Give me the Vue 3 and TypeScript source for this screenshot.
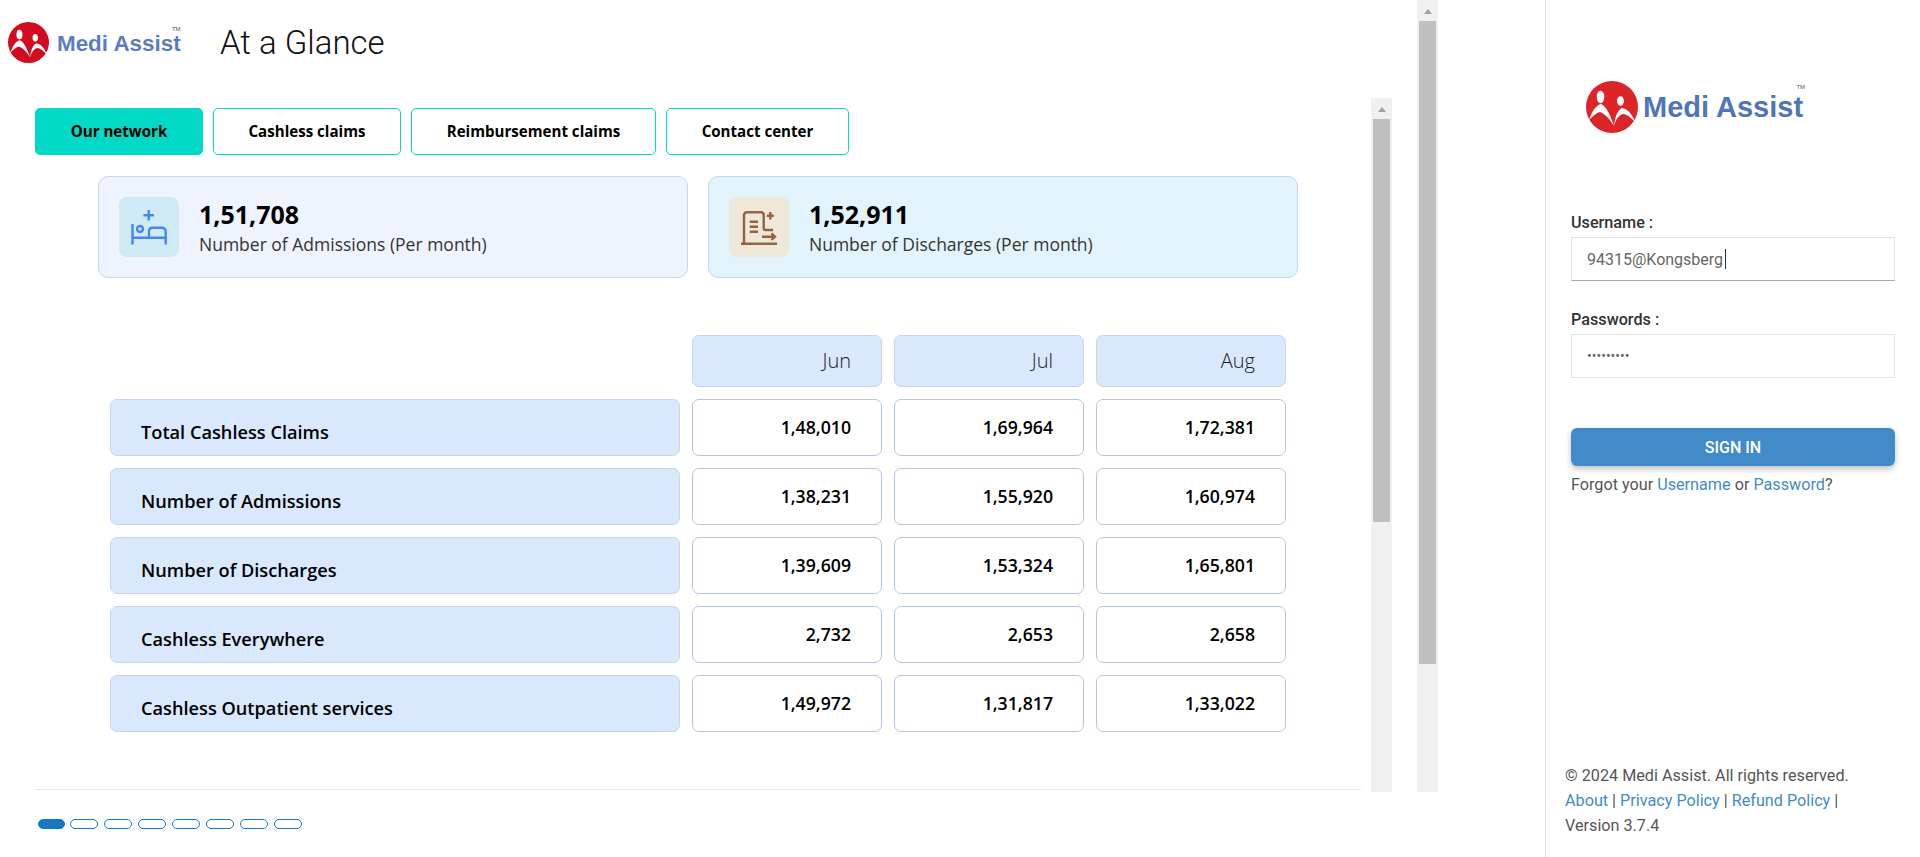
<script setup lang="ts">
interface Row { label: string; values: string[] }
const tabs: string[] = ['Our network', 'Cashless claims', 'Reimbursement claims', 'Contact center']
const months: string[] = ['Jun', 'Jul', 'Aug']
const rows: Row[] = [
  { label: 'Total Cashless Claims', values: ['1,48,010', '1,69,964', '1,72,381'] },
  { label: 'Number of Admissions', values: ['1,38,231', '1,55,920', '1,60,974'] },
  { label: 'Number of Discharges', values: ['1,39,609', '1,53,324', '1,65,801'] },
  { label: 'Cashless Everywhere', values: ['2,732', '2,653', '2,658'] },
  { label: 'Cashless Outpatient services', values: ['1,49,972', '1,31,817', '1,33,022'] },
]
const dots: number[] = [0, 1, 2, 3, 4, 5, 6, 7]
</script>

<template>
  <div class="page">
    <div class="left">
      <div class="main">
        <header class="head">
          <div class="brand brand-small">
            <svg class="mark" viewBox="0 0 52 52">
              <circle cx="26" cy="26" r="26" fill="#d20b1f" />
              <ellipse cx="14.5" cy="16" rx="3.8" ry="6.2" fill="#fff" />
              <ellipse cx="34.5" cy="20" rx="3.4" ry="4.8" fill="#fff" />
              <path d="M3 39C6 30 10 24 15 23C20 25 24 33 28 45C23 37 19 33 14 31C10 32 7 35 3 39Z" fill="#fff" />
              <path d="M28 45C29 35 32 29 36 27C41 28 46 32 49 41C45 37 41 33 37 33C33 34 30 38 28 45Z" fill="#fff" />
            </svg>
            <span class="brand-name">Medi Assist<sup class="tm">TM</sup></span>
          </div>
          <h1 class="title">At a Glance</h1>
        </header>
        <div class="body">
          <div class="content">
            <nav class="tabs">
              <button v-for="(t, i) in tabs" :key="t" class="tab" :class="{ active: i === 0 }">{{ t }}</button>
            </nav>
            <section class="cards">
              <div class="card card-a">
                <div class="ico ico-a">
                  <svg viewBox="0 0 60 60" width="60" height="60" fill="none" stroke="#4286f5" stroke-width="2.4">
                    <path d="M13.5 27v20.5M13.5 40.7H47.5M30 40.7V34a3.3 3.3 0 0 1 3.3-3.3H43a3.7 3.7 0 0 1 3.7 3.7v13" />
                    <circle cx="21" cy="32" r="3" />
                    <path d="M29.7 13v10.6M24.4 18.3H35" />
                  </svg>
                </div>
                <div>
                  <div class="num">1,51,708</div>
                  <div class="sub">Number of Admissions (Per month)</div>
                </div>
              </div>
              <div class="card card-b">
                <div class="ico ico-b">
                  <svg viewBox="0 0 60 60" width="60" height="60" fill="none" stroke="#98623f" stroke-width="2.4">
                    <path d="M15 46.7V18a2.7 2.7 0 0 1 2.7-2.7H32a2.7 2.7 0 0 1 2.7 2.7v13a2 2 0 0 0 2 2H44M12 46.7H48" />
                    <path d="M20.7 24.7H29M20.7 29.7H29M20.7 34.7H29" />
                    <path d="M41.3 15v7.4M37.8 18.7h7M33 39.7H46M42.5 36.5L46 39.7L42.5 43" />
                  </svg>
                </div>
                <div>
                  <div class="num">1,52,911</div>
                  <div class="sub">Number of Discharges (Per month)</div>
                </div>
              </div>
            </section>
            <section class="grid">
              <div class="blank"></div>
              <div v-for="m in months" :key="m" class="month">{{ m }}</div>
              <template v-for="r in rows" :key="r.label">
                <div class="label">{{ r.label }}</div>
                <div v-for="(v, i) in r.values" :key="i" class="val">{{ v }}</div>
              </template>
            </section>
            <hr class="rule" />
          </div>
          <div class="bar inner-bar">
            <div class="arrow"></div>
            <div class="thumb thumb-inner"></div>
          </div>
        </div>
        <div class="pager">
          <span v-for="d in dots" :key="d" class="dot" :class="{ on: d === 0 }"></span>
        </div>
      </div>
      <div class="bar outer-bar">
        <div class="arrow"></div>
        <div class="thumb thumb-outer"></div>
      </div>
    </div>

    <aside class="panel">
      <div class="brand brand-large">
        <svg class="mark" viewBox="0 0 52 52">
          <circle cx="26" cy="26" r="26" fill="#dc2528" />
          <ellipse cx="14.5" cy="16" rx="3.8" ry="6.2" fill="#fff" />
          <ellipse cx="34.5" cy="20" rx="3.4" ry="4.8" fill="#fff" />
          <path d="M3 39C6 30 10 24 15 23C20 25 24 33 28 45C23 37 19 33 14 31C10 32 7 35 3 39Z" fill="#fff" />
          <path d="M28 45C29 35 32 29 36 27C41 28 46 32 49 41C45 37 41 33 37 33C33 34 30 38 28 45Z" fill="#fff" />
        </svg>
        <span class="brand-name">Medi Assist<sup class="tm">TM</sup></span>
      </div>
      <form class="form" @submit.prevent>
        <label class="field-label">Username :</label>
        <div class="input-wrap">
          <input class="input input-user" type="text" value="94315@Kongsberg" readonly />
          <span class="caret"></span>
        </div>
        <label class="field-label second">Passwords :</label>
        <input class="input input-pass" type="password" value="secretpwd" readonly />
        <button class="signin" type="submit">SIGN IN</button>
        <p class="forgot">Forgot your <a>Username</a> or <a>Password</a>?</p>
      </form>
      <footer class="foot">
        <div>© 2024 Medi Assist. All rights reserved.</div>
        <div><a>About</a> | <a>Privacy Policy</a> | <a>Refund Policy</a> |</div>
        <div>Version 3.7.4</div>
      </footer>
    </aside>
  </div>
</template>

<style>
html, body { margin: 0; padding: 0; background: #fff; overflow: hidden; }
</style>

<style scoped>
.page { display: flex; width: 1920px; height: 857px; font-family: "Open Sans", sans-serif; color: #000; overflow: hidden; }
.left { width: 1545px; display: flex; align-items: flex-start; }
.main { width: 1417px; height: 857px; display: flex; flex-direction: column; }
.head { height: 98px; display: flex; align-items: flex-start; }
.brand { display: flex; align-items: center; font-family: "Liberation Sans", Arial, sans-serif; font-weight: 700; }
.brand-small { margin: 22px 0 0 8px; height: 40px; width: 212px; }
.brand-small .mark { width: 41px; height: 41px; flex: none; }
.brand-small .brand-name { margin-left: 8px; font-size: 22.4px; color: #5b7dbf; padding-top: 3px; }
.brand-name { position: relative; white-space: nowrap; }
.tm { position: absolute; right: 0; top: -3px; font-size: 6px; font-weight: 400; color: #555; line-height: 8px; }
.title { margin: 21px 0 0; font: 300 33px/44px Roboto, sans-serif; color: #111; }
.body { height: 694px; display: flex; align-items: flex-start; overflow: hidden; }
.content { margin-left: 35px; width: 1326px; display: flex; flex-direction: column; }
.tabs { display: flex; gap: 10px; margin-top: 10px; }
.tab { height: 47px; padding: 0 0 1px; box-sizing: border-box; background: #fff; border: 1px solid #00d9c6; border-radius: 5px; font: 700 15.1px "Open Sans", sans-serif; color: #000; }
.tab:nth-child(1) { width: 168px; }
.tab:nth-child(2) { width: 188px; }
.tab:nth-child(3) { width: 245px; }
.tab:nth-child(4) { width: 183px; }
.tab.active { background: #00d9c6; }
.cards { display: flex; gap: 20px; margin: 21px 0 0 63px; }
.card { width: 590px; height: 102px; box-sizing: border-box; padding: 20px; display: flex; align-items: center; gap: 20px; border: 1px solid #c9d5e8; border-radius: 10px; }
.card-a { background: #eff3fe; }
.card-b { background: #e3f3fb; }
.ico { width: 60px; height: 60px; flex: none; border-radius: 8px; }
.ico svg { display: block; }
.ico-a { background: #d0eaf5; }
.ico-b { background: #ede8da; }
.num { font-size: 25px; font-weight: 700; line-height: 30px; color: #000; margin-top: 2px; }
.sub { font-size: 17.5px; line-height: 26px; color: #333; margin-top: 2px; }
.grid { display: grid; grid-template-columns: 570px 190px 190px 190px; grid-template-rows: 52px repeat(5, 57px); gap: 12px; margin: 57px 0 0 75px; }
.month { box-sizing: border-box; background: #d9e8fd; border: 1px solid #c5d5ec; border-radius: 7px; text-align: right; padding-right: 30px; font-size: 20px; font-weight: 300; line-height: 50px; color: #222; }
.label { box-sizing: border-box; background: #d9e8fd; border: 1px solid #c5d5ec; border-radius: 7px; padding: 20px 0 0 30px; font-size: 18.2px; font-weight: 600; line-height: 24px; color: #000; }
.val { box-sizing: border-box; background: #fff; border: 1px solid #b4c5e6; border-radius: 7px; text-align: right; padding-right: 30px; font-size: 17.7px; font-weight: 600; line-height: 55px; color: #000; }
.rule { margin: 57px 0 0; border: 0; border-top: 1px solid #e5e5e5; }
.bar { width: 21px; flex: none; background: #f0f0f0; display: flex; flex-direction: column; align-items: center; }
.inner-bar { margin-left: 10px; height: 694px; }
.outer-bar { height: 792px; }
.arrow { height: 21px; width: 0; box-sizing: border-box; display: block; position: relative; }
.arrow::after { content: ""; position: absolute; left: -4px; top: 9px; border-left: 4px solid transparent; border-right: 4px solid transparent; border-bottom: 5px solid #a0a0a0; }
.thumb { width: 17px; background: #bfbfbf; }
.thumb-inner { height: 403px; }
.thumb-outer { height: 643px; }
.pager { display: flex; align-items: center; gap: 6px; margin: 26px 0 0 38px; }
.dot { width: 28px; height: 10px; box-sizing: border-box; border: 1px solid #1a78c2; border-radius: 6px; background: #fff; }
.dot.on { width: 27px; background: #1a78c2; margin-top: 1px; margin-right: -1px; }
.panel { width: 375px; height: 857px; box-sizing: border-box; border-left: 1px solid #ddd; display: flex; flex-direction: column; font-family: Roboto, sans-serif; color: #555; }
.brand-large { margin: 81px 0 0 40px; height: 52px; }
.brand-large .mark { width: 52px; height: 52px; flex: none; }
.brand-large .brand-name { margin-left: 5px; font-size: 29px; color: #4f75bb; }
.brand-large .tm { top: -8px; right: -2px; }
.form { margin: 80px 0 0 25px; width: 324px; display: flex; flex-direction: column; }
.field-label { font-size: 16.2px; font-weight: 500; line-height: 20px; color: #333; }
.second { margin-top: 29px; }
.input-wrap { position: relative; height: 44px; margin-top: 4px; }
.input { display: block; width: 324px; height: 44px; margin-top: 4px; box-sizing: border-box; border: 1px solid #e2e2e2; padding: 0 15px; font: 400 16px Roboto, sans-serif; color: #666; background: #fff; outline: none; }
.input-wrap .input { margin-top: 0; }
.input-user { border-bottom-color: #aaa; }
.input-pass { font-size: 14px; }
.caret { position: absolute; left: 154px; top: 12px; width: 1px; height: 20px; background: #333; }
.signin { margin-top: 50px; height: 38px; border: 0; border-radius: 6px; background: #428bca; color: #fff; font: 500 16px Roboto, sans-serif; box-shadow: 0 3px 6px rgba(0, 0, 0, 0.25); }
.forgot { margin: 9px 0 0; font-size: 16.2px; line-height: 20px; color: #555; }
a { color: #428bca; }
.foot { margin: auto 0 0; padding: 0 0 19px 19px; font-size: 16.2px; line-height: 25px; color: #555; }
</style>
